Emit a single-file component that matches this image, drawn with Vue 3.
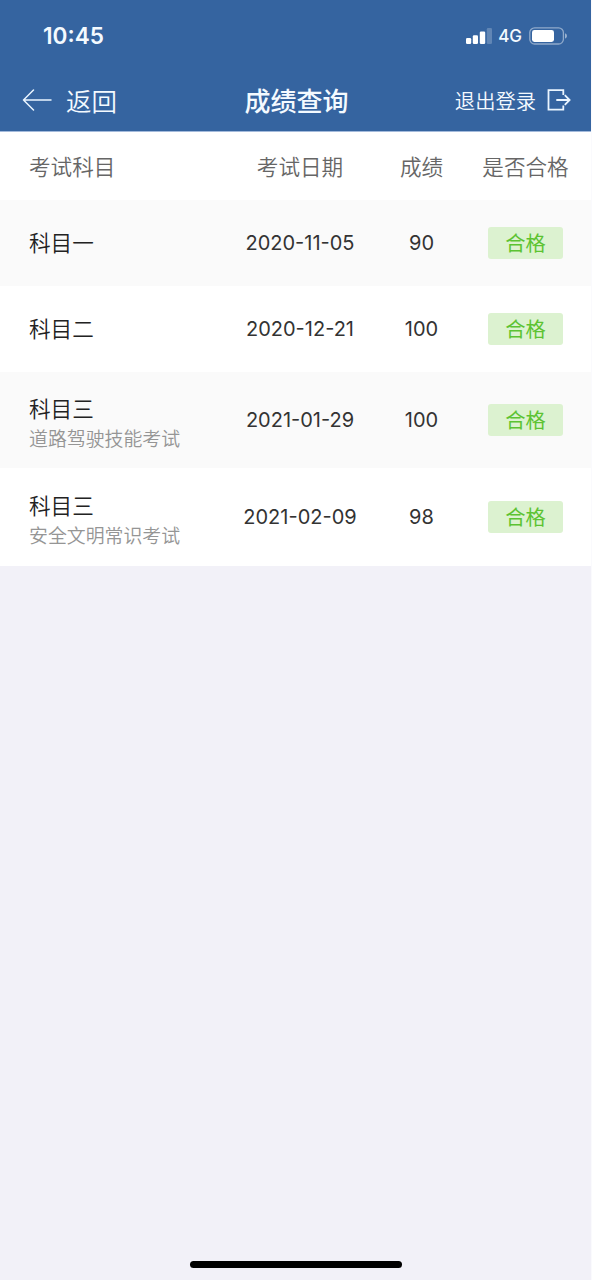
<script setup>
const records = [
  { subject: '科目一', note: '', date: '2020-11-05', score: 90 },
  { subject: '科目二', note: '', date: '2020-12-21', score: 100 },
  { subject: '科目三', note: '道路驾驶技能考试', date: '2021-01-29', score: 100 },
  { subject: '科目三', note: '安全文明常识考试', date: '2021-02-09', score: 98 },
]
</script>

<template>
  <div class="screen">
    <header class="top">
      <div class="status">
        <span class="clock">10:45</span>
        <div class="indicators">
          <svg class="signal" width="27" height="18" viewBox="0 0 27 18" fill="#fff">
            <rect x="1" y="11" width="5.2" height="6" rx="1.2" />
            <rect x="7.8" y="8.3" width="5.2" height="8.7" rx="1.2" />
            <rect x="14.8" y="4.5" width="5.4" height="12.5" rx="1.2" />
            <rect x="21.8" y="1" width="5.2" height="16" rx="1.2" opacity=".22" />
          </svg>
          <span class="network">4G</span>
          <svg class="battery" width="38" height="18" viewBox="0 0 38 18">
            <rect x=".8" y=".8" width="33.6" height="16.2" rx="4.8" fill="none" stroke="#fff" stroke-opacity=".45" stroke-width="1.3" />
            <rect x="3" y="3" width="22" height="12" rx="2.4" fill="#fff" />
            <path d="M36 6.3q2 .8 2 2.7t-2 2.7z" fill="#fff" fill-opacity=".5" />
          </svg>
        </div>
      </div>
      <nav class="nav">
        <div class="back">
          <svg width="30" height="22" viewBox="0 0 30 22" fill="none" stroke="#eaf5ff" stroke-width="1.5" stroke-linecap="round" stroke-linejoin="round">
            <path d="M11.5 1 1.5 11l10 10M1.5 11H29" />
          </svg>
          <span>返回</span>
        </div>
        <h1>成绩查询</h1>
        <div class="logout">
          <span>退出登录</span>
          <svg width="24" height="22" viewBox="0 0 24 22" fill="none" stroke="#eaf5ff" stroke-width="1.8">
            <path d="M16.3 6.1V1.1H1.5v19.6h14.8v-4.2M9.3 11h13M17.8 6.2l4.8 4.8-4.8 4.8" />
          </svg>
        </div>
      </nav>
    </header>

    <main class="table">
      <div class="row head">
        <span>考试科目</span>
        <span>考试日期</span>
        <span>成绩</span>
        <span>是否合格</span>
      </div>
      <div v-for="r in records" :key="r.date" class="row" :class="{ tall: r.note }">
        <div class="subject">
          <span>{{ r.subject }}</span>
          <small v-if="r.note">{{ r.note }}</small>
        </div>
        <span class="num">{{ r.date }}</span>
        <span class="num">{{ r.score }}</span>
        <span class="tag">合格</span>
      </div>
    </main>

    <footer class="home"><i></i></footer>
  </div>
</template>

<style>
body {
  background: #f2f1f8;
}
</style>

<style scoped>
.screen {
  display: flex;
  flex-direction: column;
  width: 592px;
  height: 1280px;
  box-sizing: border-box;
  border-right: 1px solid #fafafd;
  background: #f2f1f8;
  font-family: Inter, "Noto Sans CJK SC", sans-serif;
}

.top {
  height: 131px;
  border-bottom: 1px solid #a3badb;
  background: #3564a0;
  color: #f4faff;
}

.status {
  display: flex;
  justify-content: space-between;
  align-items: center;
  height: 72px;
  padding: 0 24px 0 43px;
}

.clock {
  padding-bottom: 1px;
  font-size: 22.6px;
  font-weight: 600;
}

.indicators {
  display: flex;
  align-items: center;
}

.network {
  margin: 0 7px 0 6px;
  font-size: 17px;
  font-weight: 500;
}

.nav {
  display: grid;
  grid-template-columns: 1fr auto 1fr;
  align-items: center;
  height: 56px;
  padding: 0 20px 0 22px;
  font-family: "Noto Sans CJK SC", sans-serif;
  font-weight: 350;
}

.nav span,
.nav h1 {
  padding-bottom: 1px;
}

.back {
  display: flex;
  align-items: center;
  gap: 14px;
  font-size: 25.5px;
  line-height: 36px;
}

h1 {
  margin: 0;
  font-size: 26px;
  font-weight: 500;
  line-height: 36px;
}

.logout {
  display: flex;
  justify-content: flex-end;
  align-items: center;
  gap: 11px;
  font-size: 20.3px;
  line-height: 30px;
}

.table {
  background: #fff;
  color: #333;
}

.row {
  display: grid;
  grid-template-columns: 207px 128px 115px 93px;
  align-items: center;
  justify-items: center;
  height: 86px;
  padding-left: 29px;
}

.row > :first-child {
  justify-self: start;
}

.row:nth-child(even) {
  background: #fafafa;
}

.head {
  height: 68px;
  color: #666;
  font-family: "Noto Sans CJK SC", sans-serif;
  font-size: 21.6px;
  font-weight: 350;
}

.head span {
  padding-bottom: 2px;
}

.tall {
  height: 96px;
}

.tall:last-child {
  height: 98px;
}

.subject {
  display: flex;
  flex-direction: column;
  padding-bottom: 3px;
  font-family: "Noto Sans CJK SC", sans-serif;
  font-size: 21.6px;
  font-weight: 350;
  line-height: 31px;
  color: #222;
}

.tall .subject {
  padding: 3px 0 0;
}

.subject small {
  color: #959595;
  font-size: 18.9px;
  font-weight: 350;
  line-height: 29px;
}

.num {
  font-size: 20px;
}

.tag {
  width: 75px;
  height: 32px;
  border-radius: 3px;
  background: #dcf2d0;
  color: #5cc332;
  font-family: "Noto Sans CJK SC", sans-serif;
  font-size: 20.3px;
  line-height: 31px;
  text-align: center;
}

.home {
  display: flex;
  justify-content: center;
  margin-top: auto;
  padding-bottom: 12px;
}

.home i {
  width: 212px;
  height: 7px;
  border-radius: 4px;
  background: #000;
}
</style>
